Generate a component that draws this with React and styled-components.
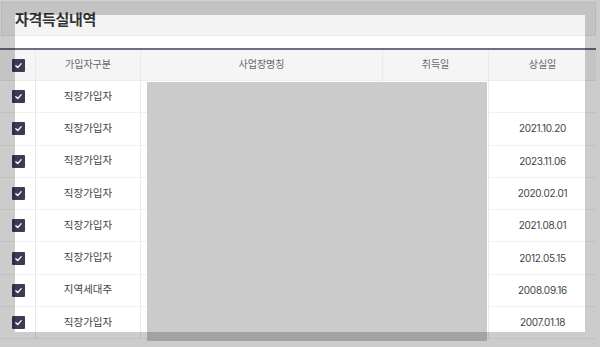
import React from 'react';
import styled, { createGlobalStyle } from 'styled-components';

const rows = [
  { type: '직장가입자', lost: '' },
  { type: '직장가입자', lost: '2021.10.20' },
  { type: '직장가입자', lost: '2023.11.06' },
  { type: '직장가입자', lost: '2020.02.01' },
  { type: '직장가입자', lost: '2021.08.01' },
  { type: '직장가입자', lost: '2012.05.15' },
  { type: '지역세대주', lost: '2008.09.16' },
  { type: '직장가입자', lost: '2007.01.18' },
];

export default function App() {
  return (
    <>
      <GlobalStyle />
      <Page>
        <TitleBar>
          <Title>자격득실내역</Title>
        </TitleBar>
        <Table>
          <HeadRow>
            <CheckCell><CheckBox /></CheckCell>
            <HeadCell>가입자구분</HeadCell>
            <HeadCell>사업장명칭</HeadCell>
            <HeadCell>취득일</HeadCell>
            <HeadCell $last>상실일</HeadCell>
          </HeadRow>
          {rows.map((row, i) => (
            <BodyRow key={i}>
              <CheckCell><CheckBox /></CheckCell>
              <Cell>{row.type}</Cell>
              <Cell />
              <Cell />
              <Cell $last $date>{row.lost}</Cell>
            </BodyRow>
          ))}
        </Table>
        <Masked />
        <Spotlight />
      </Page>
    </>
  );
}

function CheckBox() {
  return (
    <Box>
      <svg width="9" height="9" viewBox="0 0 10 10">
        <path d="M2 5.2 L4.2 7.2 L8 3" fill="none" stroke="#fff" strokeWidth="1.4" strokeLinecap="round" strokeLinejoin="round" />
      </svg>
    </Box>
  );
}

const GlobalStyle = createGlobalStyle`
  body {
    margin: 0;
    background: #fff;
    font-family: "Noto Sans CJK KR", sans-serif;
    overflow: hidden;
  }
`;

const Page = styled.div`
  position: relative;
  width: 596px;
  height: 347px;
  padding-top: 2px;
`;

const TitleBar = styled.div`
  margin-left: 1px;
  height: 34px;
  background: #f4f4f4;
  border: 1px solid #e8e8e8;
  display: flex;
  align-items: center;
  padding-left: 13px;
  padding-bottom: 1px;
  box-sizing: border-box;
  width: 595px;
`;

const Title = styled.h2`
  margin: 0;
  font-size: 15px;
  font-weight: 700;
  color: #333;
  letter-spacing: -0.3px;
`;

const Table = styled.div`
  margin-top: 12px;
  border-top: 2px solid #6e6e80;
`;

const rowGrid = `
  display: grid;
  grid-template-columns: 36px 105px 242px 106px 107px;
`;

const HeadRow = styled.div`
  ${rowGrid}
  height: 30px;
  background: #f5f5f5;
  border-bottom: 1px solid #ececec;
`;

const BodyRow = styled.div`
  ${rowGrid}
  height: 31.3px;
  background: #fff;
  border-bottom: 1px solid #f0f0f0;
`;

const CheckCell = styled.div`
  display: flex;
  align-items: center;
  padding-left: 12px;
  border-right: 1px solid #e9e9e9;
`;

const Box = styled.span`
  width: 13px;
  height: 13px;
  background: #3b3b55;
  border-radius: 1px;
  display: flex;
  align-items: center;
  justify-content: center;
`;

const HeadCell = styled.div`
  display: flex;
  align-items: center;
  justify-content: center;
  padding-bottom: 3px;
  font-size: 10px;
  color: #666;
  border-right: ${p => (p.$last ? 'none' : '1px solid #e9e9e9')};
`;

const Cell = styled.div`
  display: flex;
  align-items: center;
  justify-content: center;
  padding-bottom: ${p => (p.$date ? '1px' : '3px')};
  font-family: ${p => (p.$date ? 'Inter, "Noto Sans CJK KR", sans-serif' : 'inherit')};
  font-size: ${p => (p.$date ? '10px' : '10.5px')};
  letter-spacing: ${p => (p.$date ? '-0.3px' : 'normal')};
  color: #444;
  border-right: ${p => (p.$last ? 'none' : '1px solid #ececec')};
`;

const Masked = styled.div`
  position: absolute;
  left: 147px;
  top: 82px;
  width: 340px;
  height: 259px;
  background: #cbcbcb;
`;

const Spotlight = styled.div`
  position: absolute;
  left: 15px;
  top: 15px;
  width: 570px;
  height: 317px;
  box-shadow: 0 0 0 1000px rgba(0, 0, 0, 0.2);
  pointer-events: none;
`;
